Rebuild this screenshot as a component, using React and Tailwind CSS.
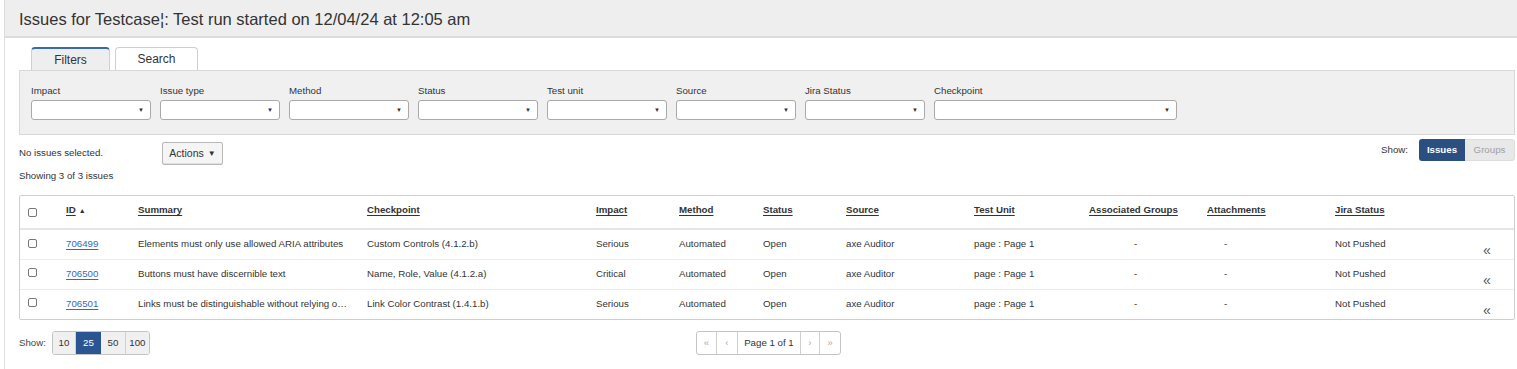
import React from "react";

const filters = [
  { label: "Impact", w: "w-[120px]" },
  { label: "Issue type", w: "w-[120px]" },
  { label: "Method", w: "w-[120px]" },
  { label: "Status", w: "w-[120px]" },
  { label: "Test unit", w: "w-[120px]" },
  { label: "Source", w: "w-[120px]" },
  { label: "Jira Status", w: "w-[120px]" },
  { label: "Checkpoint", w: "w-[243px]" },
];

const rows = [
  {
    id: "706499",
    summary: "Elements must only use allowed ARIA attributes",
    checkpoint: "Custom Controls (4.1.2.b)",
    impact: "Serious",
  },
  {
    id: "706500",
    summary: "Buttons must have discernible text",
    checkpoint: "Name, Role, Value (4.1.2.a)",
    impact: "Critical",
  },
  {
    id: "706501",
    summary: "Links must be distinguishable without relying o\u2026",
    checkpoint: "Link Color Contrast (1.4.1.b)",
    impact: "Serious",
  },
];

const headers = [
  "ID",
  "Summary",
  "Checkpoint",
  "Impact",
  "Method",
  "Status",
  "Source",
  "Test Unit",
  "Associated Groups",
  "Attachments",
  "Jira Status",
];

function Check() {
  return (
    <span className="inline-block w-[9px] h-[9px] border border-[#777] rounded-[2px] bg-white align-middle" />
  );
}

function Select({ w }) {
  return (
    <div
      className={`${w} h-[20px] border border-[#a9a9a9] rounded-[3px] bg-white flex items-center justify-end pr-[6px]`}
    >
      <span className="text-[6px] leading-none text-[#333]">▼</span>
    </div>
  );
}

export default function App() {
  return (
    <div className="w-[1517px] h-[369px] overflow-hidden bg-white text-[#333] font-['Liberation_Sans',Arial,sans-serif]">
      <div className="ml-[4px] border-l border-[#dedede] h-full">
        <div className="h-[38px] bg-[#eeeeee] border-b-2 border-[#dcdcdc] flex items-center pl-[14px]">
          <h1 className="text-[16.5px] leading-none text-[#333] pt-[3px]">
            Issues for Testcase¦: Test run started on 12/04/24 at 12:05 am
          </h1>
        </div>

        <div className="pl-[14px] pr-[2px]">
          {/* Tabs */}
          <div className="flex items-end gap-[5px] pl-[12px] pt-[9px] h-[32px]">
            <div className="w-[79px] h-[23px] bg-[#eeeeee] border border-[#cfcfcf] border-t-2 border-t-[#3a6aa8] border-b-0 rounded-t-[4px] flex items-center justify-center text-[12px]">
              Filters
            </div>
            <div className="w-[83px] h-[23px] bg-white border border-[#cfcfcf] border-b-0 rounded-t-[4px] flex items-center justify-center text-[12px] pb-[1px]">
              Search
            </div>
          </div>

          {/* Filter panel */}
          <div className="h-[65px] bg-[#f0f0f0] border border-[#d8d8d8] pl-[11px] pt-[14px]">
            <div className="flex gap-[9px]">
              {filters.map((f) => (
                <div key={f.label} className="flex flex-col">
                  <span className="text-[9.7px] leading-[12px] mb-[3px] text-[#333]">
                    {f.label}
                  </span>
                  <Select w={f.w} />
                </div>
              ))}
            </div>
          </div>

          {/* Actions row */}
          <div className="flex items-start justify-between h-[35px] pt-[7px]">
            <div className="flex items-center">
              <span className="text-[9.7px] w-[143px]">No issues selected.</span>
              <div className="w-[61px] h-[23px] border border-[#b8b8b8] rounded-[2px] bg-[#f5f5f5] flex items-center justify-center text-[10.5px] shadow-[inset_0_-1px_0_#e0e0e0]">
                Actions <span className="text-[8px] ml-[4px]">▼</span>
              </div>
            </div>
            <div className="flex items-center mt-[-3px]">
              <span className="text-[9.7px] mr-[11px]">Show:</span>
              <div className="flex h-[22px] rounded-[3px] overflow-hidden">
                <div className="w-[46px] bg-[#2b4f80] text-white text-[9.7px] font-bold flex items-center justify-center">
                  Issues
                </div>
                <div className="w-[50px] bg-[#e8e8e8] text-[#a0a0a0] text-[9.7px] flex items-center justify-center border border-l-0 border-[#dddddd] rounded-r-[3px]">
                  Groups
                </div>
              </div>
            </div>
          </div>
          <div className="text-[9.7px] leading-[12px] h-[25px]">Showing 3 of 3 issues</div>

          {/* Table */}
          <div className="border border-[#cfcfcf] rounded-[2px]">
            <table className="table-fixed w-full border-collapse text-[9.7px] text-[#333]">
              <colgroup>
                <col className="w-[46px]" />
                <col className="w-[72px]" />
                <col className="w-[229px]" />
                <col className="w-[229px]" />
                <col className="w-[83px]" />
                <col className="w-[84px]" />
                <col className="w-[83px]" />
                <col className="w-[128px]" />
                <col className="w-[115px]" />
                <col className="w-[118px]" />
                <col className="w-[128px]" />
                <col className="w-[145px]" />
                <col />
              </colgroup>
              <thead>
                <tr className="h-[33px] border-b-2 border-[#e6e6e6]">
                  <th className="pl-[8px] text-left font-normal">
                    <Check />
                  </th>
                  {headers.map((h) => (
                    <th key={h} className="text-left font-bold p-0 pb-[3px] whitespace-nowrap">
                      <span className="underline underline-offset-2">{h}</span>
                      {h === "ID" && <span className="text-[7px] ml-[3px] no-underline">▲</span>}
                    </th>
                  ))}
                  <th />
                </tr>
              </thead>
              <tbody>
                {rows.map((r, i) => (
                  <tr key={r.id} className={`h-[30px] ${i > 0 ? "border-t border-[#ececec]" : ""}`}>
                    <td className="pl-[8px] align-top pt-[6px]">
                      <Check />
                    </td>
                    <td className="whitespace-nowrap">
                      <span className="text-[#3a6ab0] underline underline-offset-2">{r.id}</span>
                    </td>
                    <td className="whitespace-nowrap">{r.summary}</td>
                    <td className="whitespace-nowrap">{r.checkpoint}</td>
                    <td>{r.impact}</td>
                    <td>Automated</td>
                    <td>Open</td>
                    <td>axe Auditor</td>
                    <td className="whitespace-nowrap">page : Page 1</td>
                    <td className="pl-[45px]">-</td>
                    <td className="pl-[17px]">-</td>
                    <td>Not Pushed</td>
                    <td className="align-bottom pb-[1px] pl-[3px] text-[14px] leading-[16px] text-[#555]">«</td>
                  </tr>
                ))}
              </tbody>
            </table>
          </div>

          {/* Footer */}
          <div className="h-[36px] pt-[11px] flex items-start">
            <div className="flex items-center">
              <span className="text-[9.7px] mr-[6px] text-[#444]">Show:</span>
              <div className="flex h-[24px] border border-[#c4c4c4] rounded-[3px] overflow-hidden text-[9.7px]">
                <div className="w-[23px] bg-[#f0f0f0] flex items-center justify-center border-r border-[#d0d0d0]">10</div>
                <div className="w-[25px] bg-[#2b5590] text-white flex items-center justify-center">25</div>
                <div className="w-[25px] bg-[#f0f0f0] flex items-center justify-center border-r border-[#d0d0d0]">50</div>
                <div className="w-[23px] bg-[#f0f0f0] flex items-center justify-center">100</div>
              </div>
            </div>
            <div className="flex h-[24px] border border-[#c4c4c4] rounded-[3px] overflow-hidden text-[9.7px] ml-[546px] bg-white">
              <div className="w-[20px] flex items-center justify-center border-r border-[#d0d0d0] text-[#aaa]">«</div>
              <div className="w-[21px] flex items-center justify-center border-r border-[#d0d0d0] text-[#aaa]">‹</div>
              <div className="w-[63px] flex items-center justify-center border-r border-[#d0d0d0] text-[#333]">Page 1 of 1</div>
              <div className="w-[19px] flex items-center justify-center border-r border-[#d0d0d0] text-[#aaa]">›</div>
              <div className="w-[20px] flex items-center justify-center text-[#aaa]">»</div>
            </div>
          </div>
        </div>
      </div>
    </div>
  );
}
